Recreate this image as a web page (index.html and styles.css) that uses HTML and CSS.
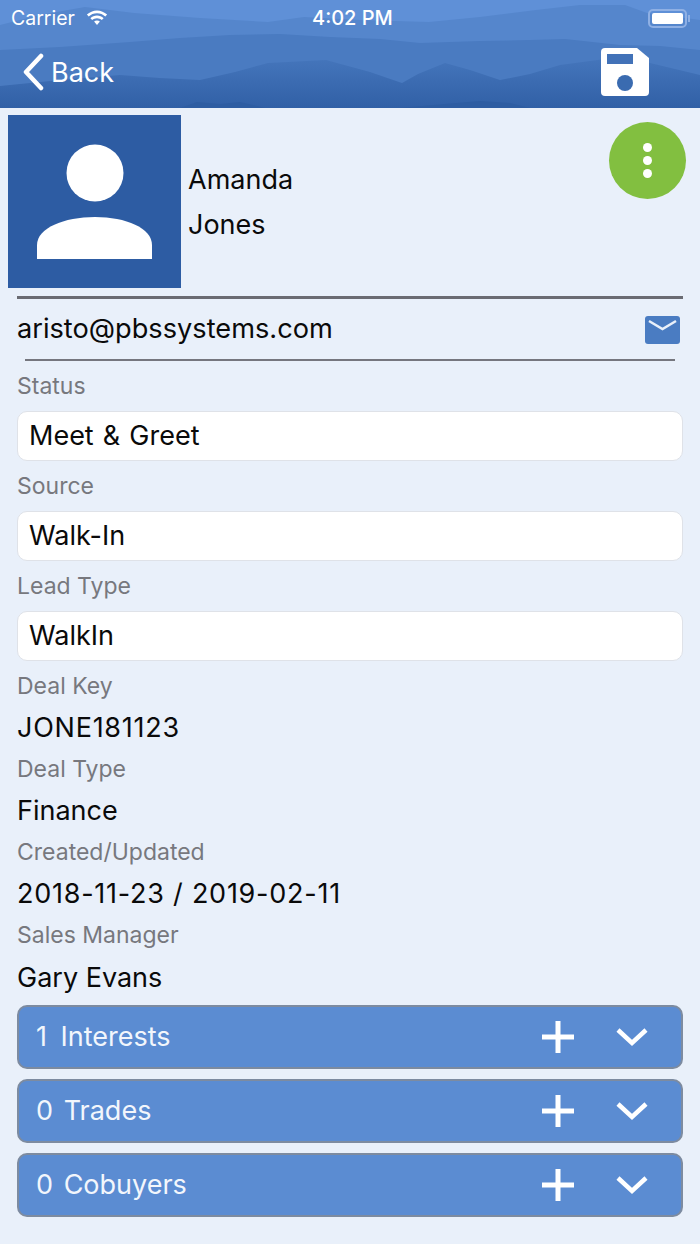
FILE: index.html
```html
<!DOCTYPE html>
<html lang="en">
<head>
    <meta charset="UTF-8">
    <meta name="viewport" content="width=device-width, initial-scale=1.0">
    <title>Lead Details</title>
    <link rel="stylesheet" href="styles.css">
</head>
<body>

<header class="top-bar">
    <svg class="mountains" viewBox="0 0 700 108" preserveAspectRatio="none">
        <defs>
            <linearGradient id="front" x1="0" y1="0" x2="0" y2="1">
                <stop offset="0" stop-color="#4576bc"/>
                <stop offset="1" stop-color="#3160a6"/>
            </linearGradient>
        </defs>
        <rect width="700" height="108" fill="#5f90d7"/>
        <path fill="#5586cc" d="M0 25 L40 15 L85 7 L134 13 L200 18 L268 22 L304 17 L360 20 L429 22 L480 17 L536 10 L580 5 L625 5 L647 13 L700 20 V108 H0 Z"/>
        <path fill="#4a7bc1" d="M0 50 L60 47 L130 42 L180 38 L230 35 L280 34 L330 37 L380 39 L420 43 L480 41 L530 40 L565 39 L620 45 L660 46 L700 50 V108 H0 Z"/>
        <path fill="url(#front)" d="M0 86 L60 80 L120 75 L160 78 L200 80 L235 72 L268 63 L326 60 L370 72 L402 83 L418 74 L445 63 L470 70 L500 80 L530 74 L560 65 L620 57 L650 63 L700 75 V108 H0 Z"/>
        <path fill="#2e5da2" d="M180 108 L197 102 L220 104 L240 102 L265 108 Z M400 108 L445 104 L480 101 L510 103 L530 108 Z"/>
    </svg>
    <div class="status-bar">
        <div class="status-left">
            <span>Carrier</span>
            <svg class="wifi" viewBox="0 0 24 16">
                <path fill="#fff" d="M12 3.200c3.200 0 6.100 1.200 8.300 3.300l1.800-1.900C19.400 2 15.900.4 12 .4S4.600 2 1.900 4.600l1.800 1.900C5.900 4.400 8.800 3.200 12 3.200z"/>
                <path fill="#fff" d="M12 8.200c1.800 0 3.500.7 4.800 1.900l1.800-1.900C16.800 6.500 14.500 5.500 12 5.500S7.200 6.500 5.400 8.200l1.800 1.900C8.500 8.900 10.200 8.200 12 8.200z"/>
                <path fill="#fff" d="M12 10.500c-1.100 0-2.100.4-2.900 1.100L12 15l2.900-3.400c-.8-.7-1.800-1.100-2.900-1.100z"/>
            </svg>
        </div>
        <span class="status-time">4:02 PM</span>
        <div class="battery"><div class="battery-fill"></div></div>
    </div>
    <div class="nav-bar">
        <div class="back">
            <svg class="back-arrow" viewBox="0 0 24 38">
                <path d="M20 3 L5 19 L20 35" fill="none" stroke="#fff" stroke-width="4.500" stroke-linecap="round" stroke-linejoin="round"/>
            </svg>
            <span>Back</span>
        </div>
        <svg class="save-icon" viewBox="0 0 48 48">
            <path fill="#fff" d="M4 0 H36 L48 10 V44 a4 4 0 0 1 -4 4 H4 a4 4 0 0 1 -4 -4 V4 a4 4 0 0 1 4 -4 Z"/>
            <rect x="6" y="6" width="26" height="10" fill="#4272b8"/>
            <circle cx="24" cy="35" r="8" fill="#3a6bb0"/>
        </svg>
    </div>
</header>

<div class="profile">
    <div class="avatar">
        <svg viewBox="0 0 173 173">
            <circle cx="87" cy="58" r="28.500" fill="#fff"/>
            <path fill="#fff" d="M29 144 V130 C29 113 56 102 87 102 C118 102 144 113 144 130 V144 Z"/>
        </svg>
    </div>
    <div class="names">
        <div>Amanda</div>
        <div>Jones</div>
    </div>
    <div class="menu-btn">
        <span class="dot"></span>
        <span class="dot"></span>
        <span class="dot"></span>
    </div>
</div>

<div class="content">
    <div class="email-row">
        <span class="email">aristo@pbssystems.com</span>
        <svg class="mail-icon" viewBox="0 0 35 28">
            <rect width="35" height="28" rx="3" fill="#4a7cc2"/>
            <path d="M4 5 L17.500 13 L31 5" fill="none" stroke="#e9f0fa" stroke-width="2.500"/>
        </svg>
    </div>

    <div class="label">Status</div>
    <div class="input-box">Meet &amp; Greet</div>
    <div class="label">Source</div>
    <div class="input-box">Walk-In</div>
    <div class="label">Lead Type</div>
    <div class="input-box">WalkIn</div>

    <div class="static-fields">
        <div class="static-label">Deal Key</div>
        <div class="static-value numeric">JONE181123</div>
        <div class="static-label">Deal Type</div>
        <div class="static-value">Finance</div>
        <div class="static-label">Created/Updated</div>
        <div class="static-value numeric">2018-11-23 / 2019-02-11</div>
        <div class="static-label">Sales Manager</div>
        <div class="static-value">Gary Evans</div>
    </div>

    <div class="sections">
        <div class="section-bar">
            <span class="section-title">1 Interests</span>
            <svg class="plus" viewBox="0 0 34 34"><path d="M17 1 V33 M1 17 H33" stroke="#fff" stroke-width="5"/></svg>
            <svg class="chevron" viewBox="0 0 32 20"><path d="M2 3 L16 16 L30 3" fill="none" stroke="#fff" stroke-width="4.500"/></svg>
        </div>
        <div class="section-bar">
            <span class="section-title">0 Trades</span>
            <svg class="plus" viewBox="0 0 34 34"><path d="M17 1 V33 M1 17 H33" stroke="#fff" stroke-width="5"/></svg>
            <svg class="chevron" viewBox="0 0 32 20"><path d="M2 3 L16 16 L30 3" fill="none" stroke="#fff" stroke-width="4.500"/></svg>
        </div>
        <div class="section-bar">
            <span class="section-title">0 Cobuyers</span>
            <svg class="plus" viewBox="0 0 34 34"><path d="M17 1 V33 M1 17 H33" stroke="#fff" stroke-width="5"/></svg>
            <svg class="chevron" viewBox="0 0 32 20"><path d="M2 3 L16 16 L30 3" fill="none" stroke="#fff" stroke-width="4.500"/></svg>
        </div>
    </div>
</div>

</body>
</html>
```

FILE: styles.css
```css
* {
    box-sizing: border-box;
}

body {
    margin: 0;
    height: 1244px;
    overflow: hidden;
    background: #e9f0fa;
    color: #0a0a0a;
    font-family: Inter, "Noto Sans", sans-serif;
}

/* Header with the mountain picture behind it */
.top-bar {
    position: relative;
    height: 108px;
    color: #fff;
}

.mountains {
    position: absolute;
    top: 0;
    left: 0;
    width: 700px;
    height: 108px;
}

.status-bar {
    position: relative;
    display: flex;
    align-items: center;
    height: 36px;
    padding: 0 13px 0 11px;
    font-size: 19.500px;
}

.status-left {
    display: flex;
    align-items: center;
    gap: 10px;
    width: 301px;
}

.wifi {
    width: 24px;
    height: 16px;
}

.status-time {
    font-size: 20px;
    font-weight: 500;
}

.battery {
    position: relative;
    width: 39px;
    height: 19px;
    margin-left: auto;
    border: 2px solid #8fb0e4;
    border-radius: 5px;
    padding: 2px;
}

.battery::after {
    content: "";
    position: absolute;
    top: 4px;
    right: -5px;
    width: 2px;
    height: 7px;
    background: #8fb0e4;
}

.battery-fill {
    height: 100%;
    background: #fff;
    border-radius: 2px;
}

.nav-bar {
    position: relative;
    display: flex;
    justify-content: space-between;
    align-items: center;
    height: 72px;
    padding: 0 51px 0 21px;
}

.back {
    display: flex;
    align-items: center;
    gap: 6px;
    font-size: 27px;
}

.back-arrow {
    width: 24px;
    height: 38px;
}

.save-icon {
    width: 48px;
    height: 48px;
}

/* Avatar and name */
.profile {
    position: relative;
    display: flex;
    align-items: center;
    gap: 7px;
    height: 180px;
    padding: 7px 0 0 8px;
}

.avatar {
    width: 173px;
    height: 173px;
    background: #2d5ca3;
}

.avatar svg {
    display: block;
    width: 173px;
    height: 173px;
}

.names {
    font-size: 27px;
    line-height: 45px;
}

.menu-btn {
    position: absolute;
    top: 14px;
    right: 14px;
    display: flex;
    flex-direction: column;
    justify-content: center;
    align-items: center;
    gap: 4px;
    width: 77px;
    height: 77px;
    border-radius: 50%;
    background: #82bf40;
}

.dot {
    width: 9px;
    height: 9px;
    border-radius: 50%;
    background: #fff;
}

/* Form content */
.content {
    padding: 8px 17px 0;
}

.email-row {
    position: relative;
    display: flex;
    justify-content: space-between;
    align-items: center;
    height: 65px;
    padding-right: 3px;
    border-top: 3px solid #6a6b72;
    font-size: 27.200px;
}

.email {
    padding-bottom: 4px;
}

/* shorter rule under the email row */
.email-row::after {
    content: "";
    position: absolute;
    left: 8px;
    right: 8px;
    bottom: 0;
    height: 2px;
    background: #75767e;
}

.mail-icon {
    width: 35px;
    height: 28px;
}

.label {
    height: 50px;
    line-height: 51px;
    font-size: 23px;
    color: #77787e;
}

.input-box {
    height: 50px;
    line-height: 48px;
    padding-left: 11px;
    background: #fff;
    border: 1px solid #dfe2e8;
    border-radius: 10px;
    font-size: 27px;
    word-spacing: 1.500px;
}

.static-fields {
    margin-top: 8.500px;
}

.static-label {
    height: 33.330px;
    line-height: 33.330px;
    font-size: 23px;
    color: #77787e;
}

.static-value {
    height: 50px;
    line-height: 50px;
    font-size: 27px;
}

/* digits run wider in the original font */
.numeric {
    letter-spacing: 0.750px;
}

.sections {
    display: flex;
    flex-direction: column;
    gap: 10px;
    margin-top: 2px;
}

.section-bar {
    display: flex;
    align-items: center;
    height: 64px;
    padding: 0 33px 0 17px;
    background: #5b8cd2;
    border: 2px solid #7d8ba0;
    border-radius: 10px;
    color: #f2f6fc;
    font-size: 27px;
    word-spacing: 3px;
}

.section-bar:first-child {
    word-spacing: 6px;
}

.section-title {
    flex: 1;
}

.plus {
    width: 34px;
    height: 34px;
    margin-right: 41px;
}

.chevron {
    width: 32px;
    height: 20px;
}
```
